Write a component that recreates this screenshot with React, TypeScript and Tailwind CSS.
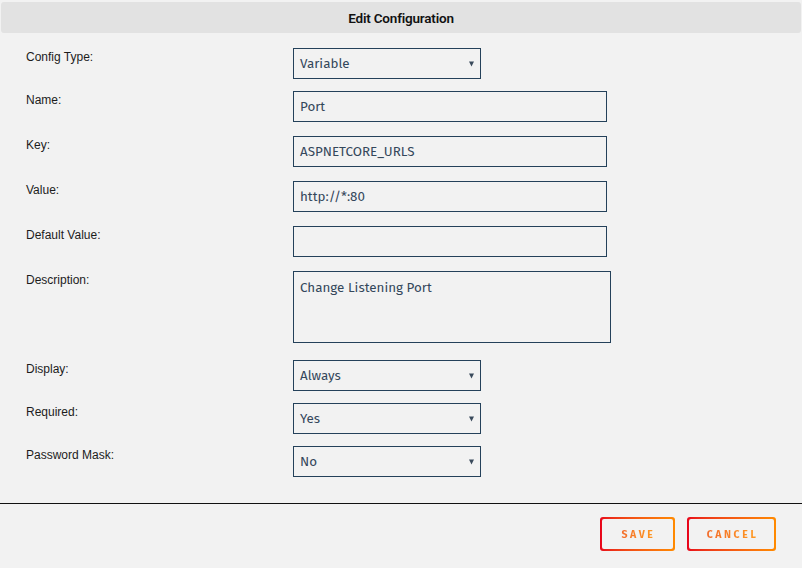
import React from 'react';

const labelFont = { fontFamily: '"Liberation Sans", Arial, sans-serif' };

function Row({ label, top, children }: { label: string; top: string; children: React.ReactNode }) {
  return (
    <div className={`flex items-start ${top}`}>
      <div className="w-[267px] shrink-0 pt-[2px] text-[12px] leading-[14px] text-[#1c1c1c]" style={labelFont}>
        {label}
      </div>
      {children}
    </div>
  );
}

function Select({ value }: { value: string }) {
  return (
    <div className="flex h-[31px] w-[188px] items-center justify-between border border-[#24415a] pl-[6px] pr-[6px] pt-[1px] text-[13.4px] text-[#34475b]">
      <span>{value}</span>
      <svg width="5" height="6" viewBox="0 0 5 6" className="mb-[1px]">
        <path d="M0 0.5 H5 L2.5 5.5 Z" fill="#3a4a5c" />
      </svg>
    </div>
  );
}

function TextBox({ value }: { value: string }) {
  return (
    <div className="flex h-[31px] w-[314px] items-center border border-[#24415a] px-[6px] pt-[1px] text-[13.4px] text-[#34475b]">
      {value}
    </div>
  );
}

function GradButton({ label, width }: { label: string; width: string }) {
  return (
    <div className={`rounded-[3px] bg-gradient-to-r from-[#e8001a] to-[#ff8a00] p-[2px] ${width}`}>
      <div className="flex h-[30px] items-center justify-center rounded-[2px] bg-[#f2f2f2] pt-[1px]">
        <span className="bg-gradient-to-r from-[#f26a2a] to-[#ff9a20] bg-clip-text pl-[2px] text-[10.5px] font-bold tracking-[2.6px] text-transparent">
          {label}
        </span>
      </div>
    </div>
  );
}

export default function App() {
  return (
    <div className="h-[568px] w-[802px] bg-[#f2f2f2] pt-[2px]" style={{ fontFamily: '"Fira Sans", "Noto Sans", sans-serif' }}>
      <div className="mx-[1px] flex h-[31px] items-center justify-center rounded-[3px] bg-[#e2e2e2] pt-[1px]">
        <span className="text-[13.5px] font-semibold tracking-[-0.2px] text-[#111]" style={{ fontFamily: '"Roboto", sans-serif' }}>
          Edit Configuration
        </span>
      </div>

      <div className="pl-[26px]">
        <Row label="Config Type:" top="mt-[15px] h-[31px]">
          <Select value="Variable" />
        </Row>
        <Row label="Name:" top="mt-[12px]">
          <TextBox value="Port" />
        </Row>
        <Row label="Key:" top="mt-[14px]">
          <TextBox value="ASPNETCORE_URLS" />
        </Row>
        <Row label="Value:" top="mt-[14px]">
          <TextBox value="http://*:80" />
        </Row>
        <Row label="Default Value:" top="mt-[14px]">
          <TextBox value="" />
        </Row>
        <Row label="Description:" top="mt-[14px]">
          <div className="h-[72px] w-[318px] border border-[#24415a] px-[6px] pt-[6px] text-[13.4px] text-[#34475b]">
            Change Listening Port
          </div>
        </Row>
        <Row label="Display:" top="mt-[17px]">
          <Select value="Always" />
        </Row>
        <Row label="Required:" top="mt-[12px]">
          <Select value="Yes" />
        </Row>
        <Row label="Password Mask:" top="mt-[12px]">
          <Select value="No" />
        </Row>
      </div>

      <div className="mt-[26px] h-[1px] bg-[#111]" />

      <div className="mt-[13px] flex justify-end gap-[12px] pr-[26px]">
        <GradButton label="SAVE" width="w-[75px]" />
        <GradButton label="CANCEL" width="w-[89px]" />
      </div>
    </div>
  );
}
